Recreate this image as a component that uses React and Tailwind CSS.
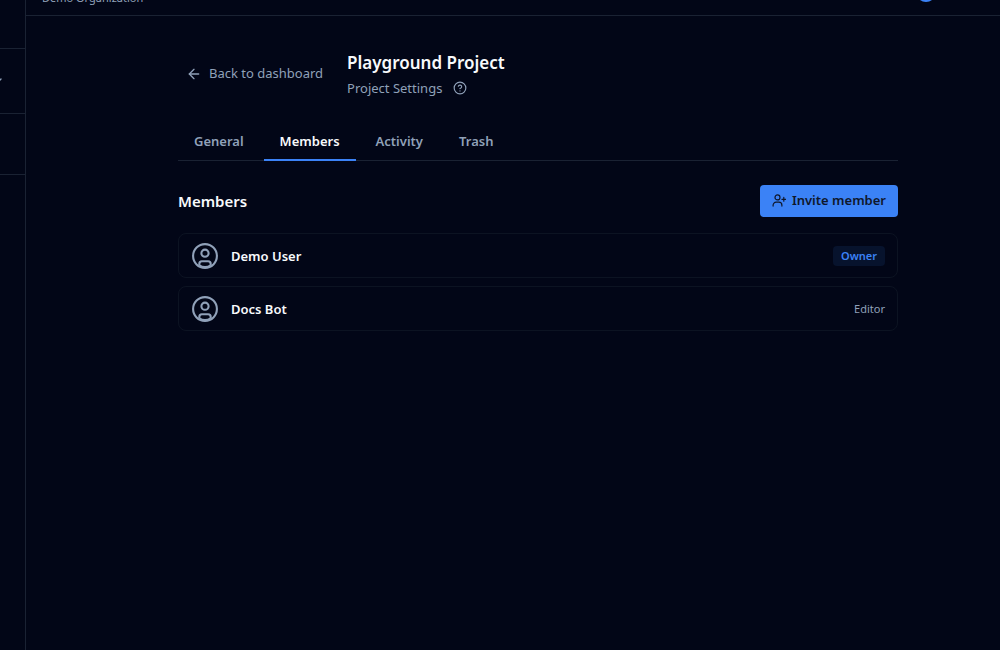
import React from 'react';
import { ArrowLeft, ChevronDown, CircleQuestionMark } from 'lucide-react';

const tabs = ['General', 'Members', 'Activity', 'Trash'];

const members = [
  { name: 'Demo User', role: 'Owner' },
  { name: 'Docs Bot', role: 'Editor' },
];

function AvatarIcon() {
  return (
    <svg viewBox="0 0 26 26" fill="none" stroke="currentColor" strokeWidth="2.1" className="ml-px h-[26px] w-[26px] text-slate-400">
      <circle cx="13" cy="13" r="11.9" />
      <circle cx="13" cy="10.2" r="3.6" />
      <path d="M7.3 22.6V20.9a2.6 2.6 0 0 1 2.6-2.6h6.2a2.6 2.6 0 0 1 2.6 2.6v1.7" />
      <path d="M7.3 22.3c3.4 2 8 2 11.4 0" />
    </svg>
  );
}

function InviteIcon() {
  return (
    <svg viewBox="0 0 14 14" fill="none" stroke="currentColor" strokeWidth="1.2" strokeLinecap="round" className="h-3.5 w-3.5">
      <circle cx="5.5" cy="3.4" r="2.5" />
      <path d="M1.1 12.1v-.9a3 3 0 0 1 3-3h2.8a3 3 0 0 1 3 3v.9" />
      <path d="M11.8 3.4v3.8M9.9 5.3h3.8" />
    </svg>
  );
}

function Sidebar() {
  return (
    <aside className="w-[26px] shrink-0 border-r border-[#1a2233]">
      <div className="h-[49px] border-b border-[#1a2233]"></div>
      <div className="flex h-[65px] items-center justify-end overflow-hidden border-b border-[#1a2233] pr-5">
        <ChevronDown className="h-4 w-4 shrink-0 text-slate-400" />
      </div>
      <div className="h-[61px] border-b border-[#1a2233]"></div>
    </aside>
  );
}

function Header() {
  return (
    <header className="flex h-4 items-end justify-between overflow-hidden border-b border-[#1a2233] pr-16 pl-4">
      <p className="mb-[9px] text-[11px] leading-4 text-slate-400">Demo Organization</p>
      <div className="mb-[13px] h-5 w-5 shrink-0 rounded-full bg-[#3b82f6]"></div>
    </header>
  );
}

function MemberRow({ member }) {
  return (
    <li className="flex h-[45px] items-center justify-between rounded-lg border border-[#0c1322] px-3">
      <div className="flex items-center gap-[13px]">
        <AvatarIcon />
        <span className="pt-0.5 text-[13px] font-semibold text-slate-50">{member.name}</span>
      </div>
      {member.role === 'Owner' ? (
        <span className="rounded bg-[#07132d] px-2 text-[11px] leading-5 font-semibold text-[#3b82f6]">
          {member.role}
        </span>
      ) : (
        <span className="pt-0.5 text-[11px] text-slate-400">{member.role}</span>
      )}
    </li>
  );
}

function App() {
  return (
    <div className="flex min-h-screen bg-[#020617] font-['Noto_Sans',sans-serif] text-slate-50">
      <Sidebar />
      <div className="min-w-0 flex-1">
        <Header />
        <main className="pt-[33px] pr-[102px] pl-[152px]">
          <div className="flex items-center gap-6 pl-2">
            <a href="#dashboard" className="flex items-center gap-[7px] text-[13px] text-slate-400">
              <ArrowLeft className="h-4 w-4" />
              Back to dashboard
            </a>
            <div>
              <h1 className="text-[17px] leading-7 font-semibold">Playground Project</h1>
              <div className="flex items-center gap-[11px] text-[13px] leading-[22px] text-slate-400">
                Project Settings
                <button type="button" aria-label="About project settings">
                  <CircleQuestionMark className="h-3.5 w-3.5" />
                </button>
              </div>
            </div>
          </div>

          <nav className="mt-6 flex gap-1 border-b border-[#1a2233]">
            {tabs.map((tab) => (
              <button
                key={tab}
                type="button"
                className={
                  tab === 'Members'
                    ? '-mb-px border-b-2 border-[#3b82f6] px-4 py-2 text-[13px] leading-5 font-semibold text-slate-50'
                    : '-mb-px border-b-2 border-transparent px-4 py-2 text-[13px] leading-5 font-semibold text-slate-400'
                }
              >
                {tab}
              </button>
            ))}
          </nav>

          <section className="mt-6">
            <div className="flex items-center justify-between">
              <h2 className="text-[15px] font-semibold">Members</h2>
              <button
                type="button"
                className="flex h-8 items-center gap-1.5 rounded bg-[#3b82f6] px-3 text-[13px] font-semibold text-slate-900"
              >
                <InviteIcon />
                Invite member
              </button>
            </div>
            <ul className="mt-4 space-y-2">
              {members.map((member) => (
                <MemberRow key={member.name} member={member} />
              ))}
            </ul>
          </section>
        </main>
      </div>
    </div>
  );
}

export default App;
